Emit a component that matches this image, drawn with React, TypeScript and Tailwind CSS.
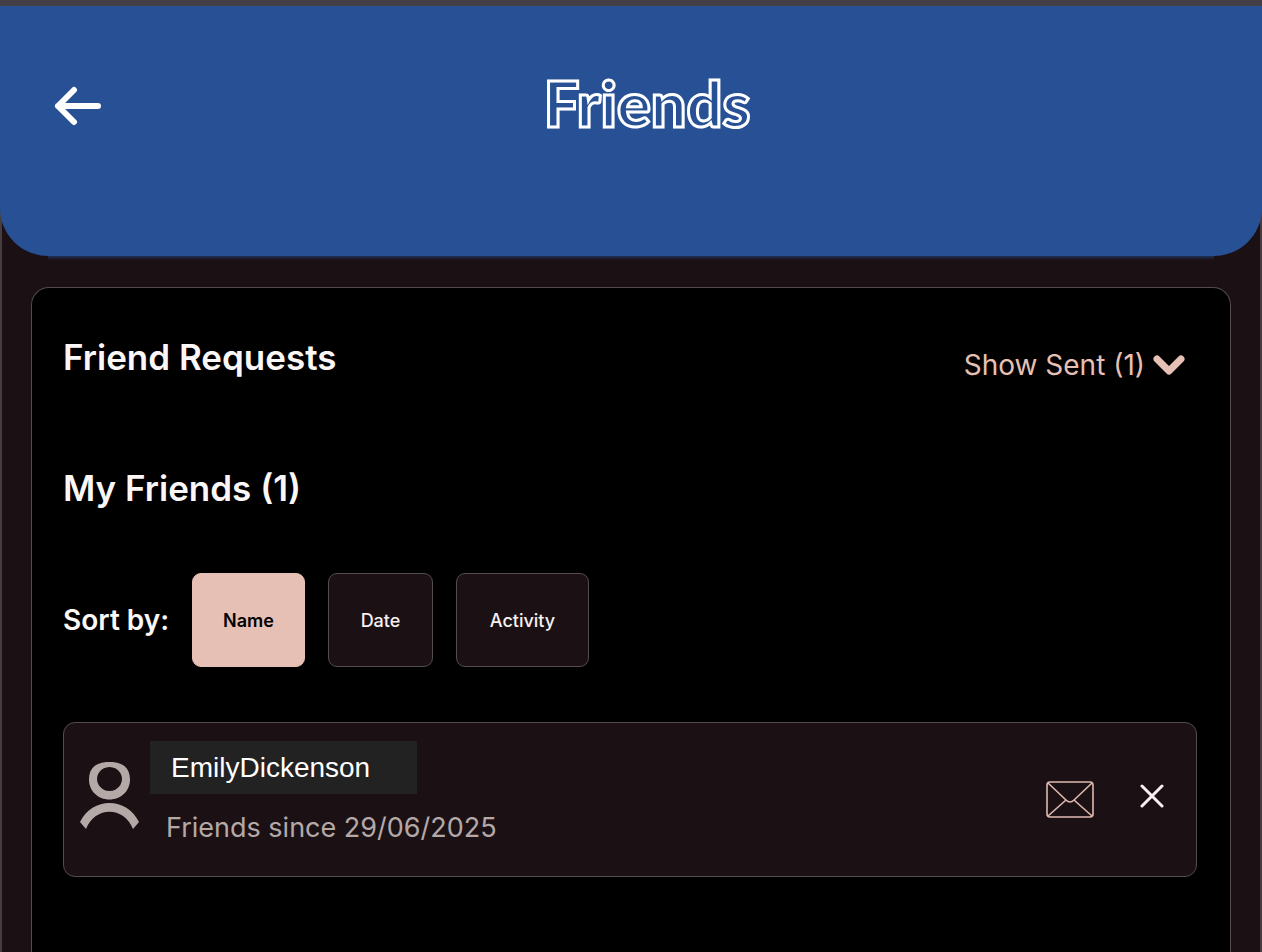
import { useState } from "react";

interface Friend {
  id: string;
  username: string;
  since: string;
}

interface SortOption {
  id: string;
  label: string;
  width: string;
}

const sortOptions: SortOption[] = [
  { id: "name", label: "Name", width: "w-[113px]" },
  { id: "date", label: "Date", width: "w-[105px]" },
  { id: "activity", label: "Activity", width: "w-[133px]" },
];

const friends: Friend[] = [
  { id: "1", username: "EmilyDickenson", since: "29/06/2025" },
];

function BackIcon() {
  return (
    <svg width="48" height="40" viewBox="0 0 48 40" fill="none" stroke="currentColor" strokeWidth="6" strokeLinecap="round" strokeLinejoin="round">
      <path d="M44 20H4M20 4L4 20l16 16" />
    </svg>
  );
}

function ChevronIcon() {
  return (
    <svg width="32" height="20" viewBox="0 0 32 20" fill="none" stroke="currentColor" strokeWidth="7" strokeLinecap="round" strokeLinejoin="round">
      <path d="M4 4l12 12L28 4" />
    </svg>
  );
}

function UserIcon() {
  return (
    <svg width="60" height="68" viewBox="0 0 60 68" fill="currentColor" fillRule="evenodd">
      <path d="M29.500 0C42 0 50 5 50 17.500C50 29 41 37.500 29.500 37.500S9 29 9 17.500C9 5 17 0 29.500 0ZM29.500 5a12.500 12 0 1 0 .01 0Z" />
      <path d="M0 60C12 34.500 47 34.500 59 60L53 67C44 44 15 44 6 67Z" />
    </svg>
  );
}

function MailIcon() {
  return (
    <svg width="48" height="38" viewBox="0 0 48 38" fill="none" stroke="currentColor" strokeWidth="1.6" strokeLinejoin="round">
      <rect x="1" y="1" width="46" height="35" rx="3" />
      <path d="M2 2l18 17q4 4 8 0L46 2M2 35l18-16M46 35L28 19" />
    </svg>
  );
}

function CloseIcon() {
  return (
    <svg width="24" height="24" viewBox="0 0 24 24" fill="none" stroke="currentColor" strokeWidth="3" strokeLinecap="round">
      <path d="M2 2l20 20M22 2L2 22" />
    </svg>
  );
}

function FriendCard({ friend }: { friend: Friend }) {
  return (
    <li className="flex h-[155px] items-center rounded-xl border border-[#544b4e] bg-[#1b1115] pl-4 pr-8">
      <span className="mb-2 text-[#b5a9a8]">
        <UserIcon />
      </span>
      <div className="mb-3 ml-[10px] flex-1">
        <p className="flex h-[53px] w-[267px] items-center bg-[#222222] pl-[21px] font-['Liberation_Sans',sans-serif] text-[28px] text-white">
          {friend.username}
        </p>
        <p className="mt-4 pl-4 text-[27px] leading-9 text-[#b5a9a8]">Friends since {friend.since}</p>
      </div>
      <button type="button" aria-label="Send message" className="mr-[46px] text-[#dfb8ae]">
        <MailIcon />
      </button>
      <button type="button" aria-label="Remove friend" className="mb-2 text-[#f8f0f2]">
        <CloseIcon />
      </button>
    </li>
  );
}

export default function App() {
  const [sortBy, setSortBy] = useState("name");

  return (
    <div className="flex min-h-screen flex-col border-x-2 border-[#463d41] bg-[#1b1115] font-['Inter',sans-serif] text-white">
      <div className="-mx-0.5 h-1.5 bg-[#443f45]" />
      <header className="relative -mx-0.5 grid h-[250px] grid-cols-[1fr_auto_1fr] items-start rounded-b-[48px] bg-[#275194] px-[54px] pt-[60px]">
        <button type="button" aria-label="Back" className="mt-5 justify-self-start">
          <BackIcon />
        </button>
        <h1 className="ml-8 font-['Lato',sans-serif] text-[63px] leading-[74px] font-black text-transparent [-webkit-text-stroke:3px_white]">
          Friends
        </h1>
        {/* soft lower edge */}
        <div className="absolute inset-x-12 top-full h-1 bg-linear-to-b from-[#1d3159] to-[#1b1115]" />
      </header>

      <main className="mx-[29px] mt-[31px] flex-1 rounded-t-[18px] border border-b-0 border-[#544b4e] bg-black pt-12 pr-[33px] pl-[31px]">
        {/* Requests */}
        <section className="flex items-start justify-between">
          <h2 className="text-[35px] leading-[42px] font-semibold text-[#faf7f6]">Friend Requests</h2>
          <button type="button" className="mr-3 flex h-[58px] items-center gap-2 text-[28px] text-[#e7c0b5]">
            Show Sent (1)
            <ChevronIcon />
          </button>
        </section>

        {/* Friends list */}
        <section className="mt-[73px]">
          <h2 className="text-[35px] leading-[42px] font-semibold text-[#faf7f6]">My Friends (1)</h2>

          <div className="mt-16 flex items-center gap-[23px]">
            <span className="w-[106px] text-[28px] font-semibold whitespace-nowrap text-[#faf7f6]">Sort by:</span>
            {sortOptions.map((option) => (
              <button
                key={option.id}
                type="button"
                onClick={() => setSortBy(option.id)}
                className={`${option.width} h-[94px] rounded-[9px] border text-[18px] ${
                  sortBy === option.id
                    ? "border-[#e7c0b5] bg-[#e7c0b5] font-semibold text-black"
                    : "border-[#544b4e] bg-[#1b1115] font-medium text-[#f8f0f2]"
                }`}
              >
                {option.label}
              </button>
            ))}
          </div>

          <ul className="mt-[55px]">
            {friends.map((friend) => (
              <FriendCard key={friend.id} friend={friend} />
            ))}
          </ul>
        </section>
      </main>
    </div>
  );
}
